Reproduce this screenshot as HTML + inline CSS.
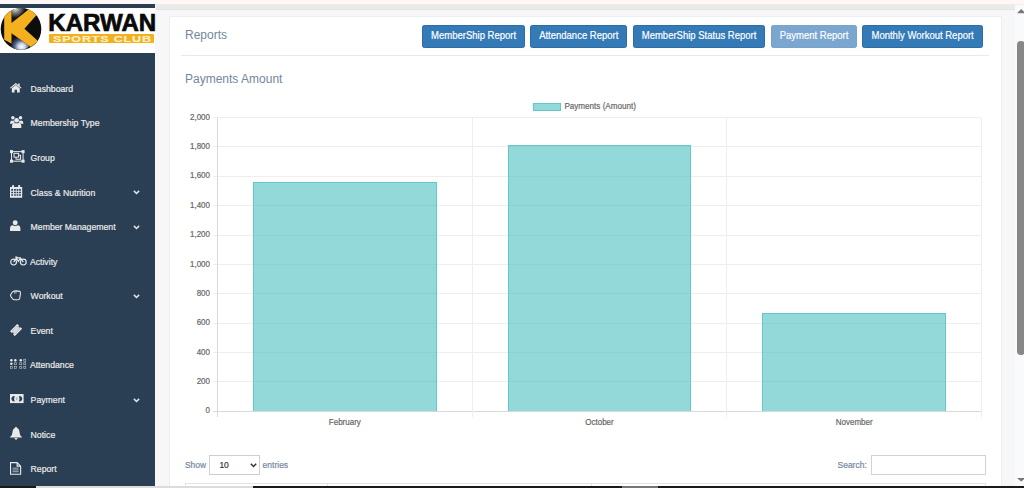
<!DOCTYPE html>
<html><head><meta charset="utf-8"><style>
html,body{margin:0;padding:0;width:1024px;height:488px;overflow:hidden;background:#f7f7f7}
body{position:relative;font-family:"Liberation Sans", sans-serif}
.t{position:absolute;white-space:nowrap;font-family:"Liberation Sans", sans-serif;-webkit-text-stroke:0.18px currentColor}
.b{-webkit-text-stroke:0}
svg{overflow:visible}
</style></head><body>
<div style="position:absolute;left:0px;top:0px;width:1024px;height:488px;background:#f7f7f7"></div>
<div style="position:absolute;left:0px;top:0px;width:1024px;height:4.4px;background:#fdf8f5"></div>
<div style="position:absolute;left:0px;top:3.6px;width:1024px;height:1.2px;background:#f5ebe6"></div>
<div style="position:absolute;left:155.5px;top:4.6px;width:860px;height:5px;background:#e9ebea"></div>
<div style="position:absolute;left:155.5px;top:9.4px;width:860px;height:0.8px;background:#e1e5e9"></div>
<div style="position:absolute;left:0px;top:4.4px;width:155.3px;height:484px;background:#2a3f54"></div>
<div style="position:absolute;left:0px;top:8px;width:155.3px;height:44.6px;background:#ffffff"></div>
<svg style="position:absolute;left:0px;top:0px;" width="45" height="55" viewBox="0 0 45 55">
<defs><clipPath id="cb"><ellipse cx="21" cy="28.9" rx="20.3" ry="20.9"/></clipPath>
<radialGradient id="h1" cx="0.22" cy="0.12" r="0.75"><stop offset="0" stop-color="#e6e6e6"/><stop offset="0.35" stop-color="#7a7a7a"/><stop offset="0.75" stop-color="#141414"/></radialGradient>
<radialGradient id="h2" cx="0.55" cy="0.8" r="0.65"><stop offset="0" stop-color="#ffffff"/><stop offset="0.3" stop-color="#c9d1e2"/><stop offset="0.62" stop-color="#4a5c82"/><stop offset="1" stop-color="#101010"/></radialGradient></defs>
<ellipse cx="21" cy="28.9" rx="20.3" ry="20.9" fill="#0d0d0d"/>
<g clip-path="url(#cb)">
<polygon points="11.5,7 29,7 11.5,23" fill="url(#h1)"/>
<polygon points="11.5,33.5 30,46 24,50 11.5,50" fill="url(#h2)"/>
<polygon points="4.2,4 11.5,4 11.5,23 32.5,6.3 38.5,12.8 24.4,28.7 38,41.1 31,47 11.5,33.3 11.5,43.6 4.2,39.8" fill="#f4b11f"/>
</g>
</svg>
<div class="t" style="left:48.3px;top:11.0px;font-size:24.1px;line-height:24.1px;font-weight:bold;color:#0a0a0a;-webkit-text-stroke:0.7px #0a0a0a;transform:scaleX(1.0);transform-origin:0 0">KARWAN</div>
<div style="position:absolute;left:49.1px;top:33.5px;width:105px;height:9.8px;background:#f2b01e;border-radius:1px"></div>
<div class="t" style="left:52.8px;top:34.6px;font-size:8.8px;line-height:8.8px;font-weight:bold;color:#fcefc6;letter-spacing:0.55px;transform:scaleX(1.43);transform-origin:0 0">SPORTS CLUB</div>
<div class="t" style="left:30.60px;top:84.74px;font-size:8.7px;line-height:8.7px;color:#ebebeb;transform:scaleY(1.09);transform-origin:0 7.36px;">Dashboard</div>
<div class="t" style="left:30.60px;top:119.33px;font-size:8.7px;line-height:8.7px;color:#ebebeb;transform:scaleY(1.09);transform-origin:0 7.36px;">Membership Type</div>
<div class="t" style="left:30.60px;top:153.92px;font-size:8.7px;line-height:8.7px;color:#ebebeb;transform:scaleY(1.09);transform-origin:0 7.36px;">Group</div>
<div class="t" style="left:30.60px;top:188.51px;font-size:8.7px;line-height:8.7px;color:#ebebeb;transform:scaleY(1.09);transform-origin:0 7.36px;">Class &amp; Nutrition</div>
<svg style="position:absolute;left:133px;top:190.07000000000002px;" width="7" height="4.5" viewBox="0 0 7 4.5"><path d="M0.9 0.9 L3.5 3.5 L6.1 0.9" fill="none" stroke="#e3e3e3" stroke-width="1.5"/></svg>
<div class="t" style="left:30.60px;top:223.10px;font-size:8.7px;line-height:8.7px;color:#ebebeb;transform:scaleY(1.09);transform-origin:0 7.36px;">Member Management</div>
<svg style="position:absolute;left:133px;top:224.66px;" width="7" height="4.5" viewBox="0 0 7 4.5"><path d="M0.9 0.9 L3.5 3.5 L6.1 0.9" fill="none" stroke="#e3e3e3" stroke-width="1.5"/></svg>
<div class="t" style="left:29.90px;top:257.69px;font-size:8.7px;line-height:8.7px;color:#ebebeb;transform:scaleY(1.09);transform-origin:0 7.36px;">Activity</div>
<div class="t" style="left:30.60px;top:292.28px;font-size:8.7px;line-height:8.7px;color:#ebebeb;transform:scaleY(1.09);transform-origin:0 7.36px;">Workout</div>
<svg style="position:absolute;left:133px;top:293.84000000000003px;" width="7" height="4.5" viewBox="0 0 7 4.5"><path d="M0.9 0.9 L3.5 3.5 L6.1 0.9" fill="none" stroke="#e3e3e3" stroke-width="1.5"/></svg>
<div class="t" style="left:30.60px;top:326.87px;font-size:8.7px;line-height:8.7px;color:#ebebeb;transform:scaleY(1.09);transform-origin:0 7.36px;">Event</div>
<div class="t" style="left:29.90px;top:361.46px;font-size:8.7px;line-height:8.7px;color:#ebebeb;transform:scaleY(1.09);transform-origin:0 7.36px;">Attendance</div>
<div class="t" style="left:30.60px;top:396.05px;font-size:8.7px;line-height:8.7px;color:#ebebeb;transform:scaleY(1.09);transform-origin:0 7.36px;">Payment</div>
<svg style="position:absolute;left:133px;top:397.61000000000007px;" width="7" height="4.5" viewBox="0 0 7 4.5"><path d="M0.9 0.9 L3.5 3.5 L6.1 0.9" fill="none" stroke="#e3e3e3" stroke-width="1.5"/></svg>
<div class="t" style="left:30.60px;top:430.64px;font-size:8.7px;line-height:8.7px;color:#ebebeb;transform:scaleY(1.09);transform-origin:0 7.36px;">Notice</div>
<div class="t" style="left:30.60px;top:465.23px;font-size:8.7px;line-height:8.7px;color:#ebebeb;transform:scaleY(1.09);transform-origin:0 7.36px;">Report</div>
<svg style="position:absolute;left:9.9px;top:82.5px;" width="11.6" height="9.5" viewBox="0 0 23 19"><path fill="#e9e9ea" d="M0 9.6 L11.5 0.2 L23 9.6 L21.7 11.1 L11.5 2.9 L1.3 11.1 Z M16.3 1 H19.3 V6.2 L16.3 3.8 Z M3.6 10.6 L11.5 4.2 L19.4 10.6 V19 H14 V13.4 H9 V19 H3.6 Z"/></svg>
<svg style="position:absolute;left:9.7px;top:115.9px;" width="13.4" height="12.2" viewBox="0 0 27 24"><g fill="#e9e9ea"><circle cx="5.8" cy="3.4" r="3.5"/><circle cx="21.2" cy="3.4" r="3.5"/><circle cx="13.4" cy="8.3" r="4.6"/><path d="M0 14.5 Q0 9.2 3.5 8.6 Q5.8 10 8.2 8.6 Q8.2 11 9.8 12.8 Q6 13.3 4.6 15.5 H0 Z"/><path d="M27 14.5 Q27 9.2 23.5 8.6 Q21.2 10 18.8 8.6 Q18.8 11 17.2 12.8 Q21 13.3 22.4 15.5 H27 Z"/><path d="M4.2 24 V18.8 Q4.2 13.8 8.6 13.3 Q13.4 15.6 18.4 13.3 Q22.8 13.8 22.8 18.8 V24 Z"/></g></svg>
<svg style="position:absolute;left:9.7px;top:150.1px;" width="14.6" height="12.8" viewBox="0 0 29 25"><g fill="none" stroke="#e9e9ea" stroke-width="2"><rect x="3" y="3" width="23" height="19"/><rect x="8" y="6.5" width="9" height="7.5"/><path d="M12 14 V18 H21 V10 H17"/></g><g fill="#e9e9ea"><rect x="0" y="0" width="6" height="6"/><rect x="23" y="0" width="6" height="6"/><rect x="0" y="19" width="6" height="6"/><rect x="23" y="19" width="6" height="6"/></g></svg>
<svg style="position:absolute;left:9.7px;top:184.9px;" width="12.2" height="12.8" viewBox="0 0 24 25"><path fill="#e9e9ea" fill-rule="evenodd" d="M0 4 H24 V25 H0 Z M2.5 8 V11 H6 V8 Z M8 8 V11 H11.5 V8 Z M13 8 V11 H16.5 V8 Z M18 8 V11 H21.5 V8 Z M2.5 13 V16 H6 V13 Z M8 13 V16 H11.5 V13 Z M13 13 V16 H16.5 V13 Z M18 13 V16 H21.5 V13 Z M2.5 18 V21 H6 V18 Z M8 18 V21 H11.5 V18 Z M13 18 V21 H16.5 V18 Z M18 18 V21 H21.5 V18 Z"/><rect x="4" y="0" width="4" height="6" rx="1.5" fill="#e9e9ea"/><rect x="16" y="0" width="4" height="6" rx="1.5" fill="#e9e9ea"/></svg>
<svg style="position:absolute;left:9.7px;top:220.1px;" width="10.4" height="11.2" viewBox="0 0 21 22"><g fill="#e9e9ea"><circle cx="10.5" cy="5.2" r="5"/><path d="M0 22 V17 Q0 11 5 10.5 Q10.5 13.5 16 10.5 Q21 11 21 17 V22 Z"/></g></svg>
<svg style="position:absolute;left:9.5px;top:255.5px;" width="16.9" height="9.7" viewBox="0 0 34 20"><g fill="none" stroke="#e9e9ea" stroke-width="2.4"><circle cx="7" cy="12.5" r="6"/><circle cx="27" cy="12.5" r="6"/><path d="M7 12.5 L13 4 H21 L27 12.5 M12 4 L17 11 L21 4 M10 2 H15"/></g></svg>
<svg style="position:absolute;left:9.7px;top:290.1px;" width="11.4" height="10.6" viewBox="0 0 23 21"><path fill="none" stroke="#e9e9ea" stroke-width="2.2" d="M1.5 9 L5 3.5 Q8 1.5 12 1.5 L20 2.5 Q21.5 4 21 8 L19.5 17 Q19 19.5 16 19.5 H8.5 Q6.5 19.5 5 17.5 L1.5 12.5 Q0.8 10.5 1.5 9 Z"/><path fill="none" stroke="#e9e9ea" stroke-width="1.4" d="M9 4 V7 M12 3.5 V7"/></svg>
<svg style="position:absolute;left:9.0px;top:322.6px;" width="14" height="14" viewBox="0 0 14 14"><g transform="translate(7.07,7.0) rotate(-45)"><rect x="-5.2" y="-3.45" width="10.4" height="6.9" rx="0.5" fill="#e9e9ea"/><circle cx="-5.2" cy="0" r="1.2" fill="#2a3f54"/><circle cx="5.2" cy="0" r="1.2" fill="#2a3f54"/><rect x="-3.5" y="-2.1" width="7" height="4.2" fill="#d5d9de" stroke="#8d99a6" stroke-width="0.55" stroke-dasharray="1 0.6"/></g></svg>
<svg style="position:absolute;left:9.5px;top:358.5px;" width="16.1" height="10.4" viewBox="0 0 32 21"><g fill="#e9e9ea"><rect x="0" y="0" width="5" height="5" rx="2.5"/><rect x="8" y="0" width="5" height="5" rx="2.5"/><rect x="0" y="7" width="5" height="5" rx="2.5"/><rect x="19" y="0" width="5" height="5" rx="2.5"/></g><g fill="none" stroke="#e9e9ea" stroke-width="1.3" opacity="0.75"><rect x="8.5" y="7.5" width="4" height="4"/><rect x="0.5" y="15.5" width="4" height="4"/><rect x="8.5" y="15.5" width="4" height="4"/><rect x="27.5" y="0.5" width="4" height="4"/><rect x="19.5" y="7.5" width="4" height="4"/><rect x="27.5" y="7.5" width="4" height="4"/><rect x="19.5" y="15.5" width="4" height="4"/><rect x="27.5" y="15.5" width="4" height="4"/></g></svg>
<svg style="position:absolute;left:9.7px;top:393.9px;" width="13.6" height="9.1" viewBox="0 0 27 18"><rect x="0" y="0" width="27" height="18" fill="#e9e9ea"/><path fill="#2a3f54" d="M9.3 3.8 Q2.6 4.5 2.8 9.2 Q2.6 14 9.3 14.7 Q7.2 9.2 9.3 3.8 Z M17.7 3.8 Q24.4 4.5 24.2 9.2 Q24.4 14 17.7 14.7 Q19.8 9.2 17.7 3.8 Z"/><path d="M13.5 6.3 V12.2" stroke="#6f7d8c" stroke-width="1.3"/></svg>
<svg style="position:absolute;left:10.1px;top:427.1px;" width="12" height="12.8" viewBox="0 0 24 25.5"><path fill="#e9e9ea" d="M12 0 Q14 0 14.5 2 Q19 3.5 19 10 Q19 17 24 20.5 V21 H0 V20.5 Q5 17 5 10 Q5 3.5 9.5 2 Q10 0 12 0 Z M9 22 H15 Q14.5 25.5 12 25.5 Q9.5 25.5 9 22 Z"/></svg>
<svg style="position:absolute;left:9.9px;top:461.5px;" width="11.2" height="12.8" viewBox="0 0 22 25"><path fill="none" stroke="#e9e9ea" stroke-width="2.2" d="M1.1 1.1 H14 L20.9 8 V23.9 H1.1 Z M14 1.1 V8 H20.9"/><path stroke="#c9d0d6" stroke-width="1.6" d="M5 12 H17 M5 15.5 H17 M5 19 H17"/></svg>
<div style="position:absolute;left:1015px;top:4.6px;width:9px;height:484px;background:#f9fafb"></div>
<svg style="position:absolute;left:1016.6px;top:8.8px;" width="8.4" height="4.4" viewBox="0 0 8.4 4.4"><polygon points="0,4.2 4.2,0 8.4,4.2" fill="#777"/></svg>
<div style="position:absolute;left:1017px;top:40.5px;width:7.6px;height:314px;background:#888;border-radius:3.8px"></div>
<svg style="position:absolute;left:1017.2px;top:477.8px;" width="8.4" height="3.6" viewBox="0 0 8.4 3.6"><polygon points="0,0 8.4,0 4.2,3.6" fill="#777"/></svg>
<div style="position:absolute;left:169.2px;top:16.3px;width:832.8px;height:480px;background:#fff;border:1px solid #eceef1;box-sizing:border-box"></div>
<div class="t" style="left:185.00px;top:28.94px;font-size:12px;line-height:12px;color:#73879c;-webkit-text-stroke:0;">Reports</div>
<div style="position:absolute;left:181px;top:55.2px;width:808px;height:1px;background:#e6e9ed"></div>
<div class="t" style="left:185.00px;top:72.64px;font-size:12px;line-height:12px;color:#73879c;-webkit-text-stroke:0;">Payments Amount</div>
<div style="position:absolute;left:422px;top:24.8px;width:103.2px;height:23.1px;background:#337ab7;border:1px solid #2e6da4;box-sizing:border-box;border-radius:2.3px"></div>
<div class="t" style="left:273.60px;width:400px;text-align:center;top:31.06px;font-size:9.5px;line-height:9.5px;color:#fff;transform:scaleY(1.1);transform-origin:0 8.04px;">MemberShip Report</div>
<div style="position:absolute;left:530.3px;top:24.8px;width:96.9px;height:23.1px;background:#337ab7;border:1px solid #2e6da4;box-sizing:border-box;border-radius:2.3px"></div>
<div class="t" style="left:378.75px;width:400px;text-align:center;top:31.06px;font-size:9.5px;line-height:9.5px;color:#fff;transform:scaleY(1.1);transform-origin:0 8.04px;">Attendance Report</div>
<div style="position:absolute;left:633.3px;top:24.8px;width:131.5px;height:23.1px;background:#337ab7;border:1px solid #2e6da4;box-sizing:border-box;border-radius:2.3px"></div>
<div class="t" style="left:499.05px;width:400px;text-align:center;top:31.06px;font-size:9.5px;line-height:9.5px;color:#fff;transform:scaleY(1.1);transform-origin:0 8.04px;">MemberShip Status Report</div>
<div style="position:absolute;left:771.1px;top:24.8px;width:85.8px;height:23.1px;background:#7aa6d0;border:1px solid #78a3cc;box-sizing:border-box;border-radius:2.3px"></div>
<div class="t" style="left:614.00px;width:400px;text-align:center;top:31.06px;font-size:9.5px;line-height:9.5px;color:#fff;transform:scaleY(1.1);transform-origin:0 8.04px;">Payment Report</div>
<div style="position:absolute;left:862.4px;top:24.8px;width:120.5px;height:23.1px;background:#337ab7;border:1px solid #2e6da4;box-sizing:border-box;border-radius:2.3px"></div>
<div class="t" style="left:722.65px;width:400px;text-align:center;top:31.06px;font-size:9.5px;line-height:9.5px;color:#fff;transform:scaleY(1.1);transform-origin:0 8.04px;">Monthly Workout Report</div>
<div style="position:absolute;left:212.6px;top:410.8px;width:768.9px;height:1px;background:#d9d9d9"></div>
<div class="t" style="left:150px;width:60px;text-align:right;top:407.43px;font-size:8px;line-height:8px;color:#666;transform:scaleY(1.15);transform-origin:0 6.77px;">0</div>
<div style="position:absolute;left:212.6px;top:381.43px;width:768.9px;height:1px;background:#eeeeee"></div>
<div class="t" style="left:150px;width:60px;text-align:right;top:378.06px;font-size:8px;line-height:8px;color:#666;transform:scaleY(1.15);transform-origin:0 6.77px;">200</div>
<div style="position:absolute;left:212.6px;top:352.06px;width:768.9px;height:1px;background:#eeeeee"></div>
<div class="t" style="left:150px;width:60px;text-align:right;top:348.69px;font-size:8px;line-height:8px;color:#666;transform:scaleY(1.15);transform-origin:0 6.77px;">400</div>
<div style="position:absolute;left:212.6px;top:322.69px;width:768.9px;height:1px;background:#eeeeee"></div>
<div class="t" style="left:150px;width:60px;text-align:right;top:319.32px;font-size:8px;line-height:8px;color:#666;transform:scaleY(1.15);transform-origin:0 6.77px;">600</div>
<div style="position:absolute;left:212.6px;top:293.32px;width:768.9px;height:1px;background:#eeeeee"></div>
<div class="t" style="left:150px;width:60px;text-align:right;top:289.95px;font-size:8px;line-height:8px;color:#666;transform:scaleY(1.15);transform-origin:0 6.77px;">800</div>
<div style="position:absolute;left:212.6px;top:263.95px;width:768.9px;height:1px;background:#eeeeee"></div>
<div class="t" style="left:150px;width:60px;text-align:right;top:260.58px;font-size:8px;line-height:8px;color:#666;transform:scaleY(1.15);transform-origin:0 6.77px;">1,000</div>
<div style="position:absolute;left:212.6px;top:234.57999999999998px;width:768.9px;height:1px;background:#eeeeee"></div>
<div class="t" style="left:150px;width:60px;text-align:right;top:231.21px;font-size:8px;line-height:8px;color:#666;transform:scaleY(1.15);transform-origin:0 6.77px;">1,200</div>
<div style="position:absolute;left:212.6px;top:205.20999999999998px;width:768.9px;height:1px;background:#eeeeee"></div>
<div class="t" style="left:150px;width:60px;text-align:right;top:201.84px;font-size:8px;line-height:8px;color:#666;transform:scaleY(1.15);transform-origin:0 6.77px;">1,400</div>
<div style="position:absolute;left:212.6px;top:175.83999999999997px;width:768.9px;height:1px;background:#eeeeee"></div>
<div class="t" style="left:150px;width:60px;text-align:right;top:172.47px;font-size:8px;line-height:8px;color:#666;transform:scaleY(1.15);transform-origin:0 6.77px;">1,600</div>
<div style="position:absolute;left:212.6px;top:146.46999999999997px;width:768.9px;height:1px;background:#eeeeee"></div>
<div class="t" style="left:150px;width:60px;text-align:right;top:143.10px;font-size:8px;line-height:8px;color:#666;transform:scaleY(1.15);transform-origin:0 6.77px;">1,800</div>
<div style="position:absolute;left:212.6px;top:117.09999999999997px;width:768.9px;height:1px;background:#eeeeee"></div>
<div class="t" style="left:150px;width:60px;text-align:right;top:113.73px;font-size:8px;line-height:8px;color:#666;transform:scaleY(1.15);transform-origin:0 6.77px;">2,000</div>
<div style="position:absolute;left:217.0px;top:117.6px;width:1px;height:299.00000000000006px;background:#d9d9d9"></div>
<div style="position:absolute;left:471.66666666666663px;top:117.6px;width:1px;height:299.00000000000006px;background:#eeeeee"></div>
<div style="position:absolute;left:726.3333333333333px;top:117.6px;width:1px;height:299.00000000000006px;background:#eeeeee"></div>
<div style="position:absolute;left:981.0px;top:117.6px;width:1px;height:299.00000000000006px;background:#eeeeee"></div>
<div style="position:absolute;left:253.1533333333333px;top:182.06715px;width:183.35999999999999px;height:229.23285px;background:rgba(75,192,192,0.6);border:1px solid rgba(75,192,192,0.66);border-bottom:none;box-sizing:border-box"></div>
<div class="t" style="left:144.83px;width:400px;text-align:center;top:418.73px;font-size:8px;line-height:8px;color:#666;transform:scaleY(1.15);transform-origin:0 6.77px;">February</div>
<div style="position:absolute;left:507.82px;top:145.20779999999996px;width:183.35999999999999px;height:266.09220000000005px;background:rgba(75,192,192,0.6);border:1px solid rgba(75,192,192,0.66);border-bottom:none;box-sizing:border-box"></div>
<div class="t" style="left:399.50px;width:400px;text-align:center;top:418.73px;font-size:8px;line-height:8px;color:#666;transform:scaleY(1.15);transform-origin:0 6.77px;">October</div>
<div style="position:absolute;left:762.4866666666667px;top:312.9105px;width:183.35999999999999px;height:98.3895px;background:rgba(75,192,192,0.6);border:1px solid rgba(75,192,192,0.66);border-bottom:none;box-sizing:border-box"></div>
<div class="t" style="left:654.17px;width:400px;text-align:center;top:418.73px;font-size:8px;line-height:8px;color:#666;transform:scaleY(1.15);transform-origin:0 6.77px;">November</div>
<div style="position:absolute;left:532.7px;top:102.6px;width:28.2px;height:8.9px;background:rgba(75,192,192,0.6);border:1px solid rgba(75,192,192,0.66);box-sizing:border-box"></div>
<div class="t" style="left:564.40px;top:103.04px;font-size:8.1px;line-height:8.1px;color:#666;transform:scaleY(1.12);transform-origin:0 6.86px;">Payments (Amount)</div>
<div class="t" style="left:184.90px;top:460.70px;font-size:8.5px;line-height:8.5px;color:#73879c;transform:scaleY(1.1);transform-origin:0 7.20px;">Show</div>
<div style="position:absolute;left:209px;top:455.2px;width:50.8px;height:19.6px;background:#fff;border:1px solid #cfcfcf;box-sizing:border-box"></div>
<div class="t" style="left:219.40px;top:460.70px;font-size:8.5px;line-height:8.5px;color:#333;transform:scaleY(1.1);transform-origin:0 7.20px;">10</div>
<svg style="position:absolute;left:249.9px;top:462.6px;" width="7" height="4.4" viewBox="0 0 7 4.4"><path d="M0.8 0.8 L3.5 3.5 L6.2 0.8" fill="none" stroke="#333" stroke-width="1.5"/></svg>
<div class="t" style="left:262.60px;top:460.70px;font-size:8.5px;line-height:8.5px;color:#73879c;transform:scaleY(1.1);transform-origin:0 7.20px;">entries</div>
<div class="t" style="left:837.50px;top:460.70px;font-size:8.5px;line-height:8.5px;color:#73879c;transform:scaleY(1.1);transform-origin:0 7.20px;">Search:</div>
<div style="position:absolute;left:871.2px;top:455.1px;width:114.5px;height:19.5px;background:#fff;border:1px solid #d2d2d2;box-sizing:border-box"></div>
<div style="position:absolute;left:185.2px;top:482.5px;width:800.5px;height:6px;background:#fff;border:1px solid #e4e4e4;box-sizing:border-box"></div>
<div style="position:absolute;left:327px;top:482.5px;width:1px;height:6px;background:#e4e4e4"></div>
<div style="position:absolute;left:591.2px;top:482.5px;width:1px;height:6px;background:#e4e4e4"></div>
<div style="position:absolute;left:0px;top:486.2px;width:1024px;height:2px;background:#1a1a1a"></div>
<div style="position:absolute;left:36px;top:486.2px;width:216.5px;height:2px;background:#dcdcdc"></div>
<div style="position:absolute;left:621.7px;top:486.2px;width:36.4px;height:2px;background:#777"></div>
</body></html>
